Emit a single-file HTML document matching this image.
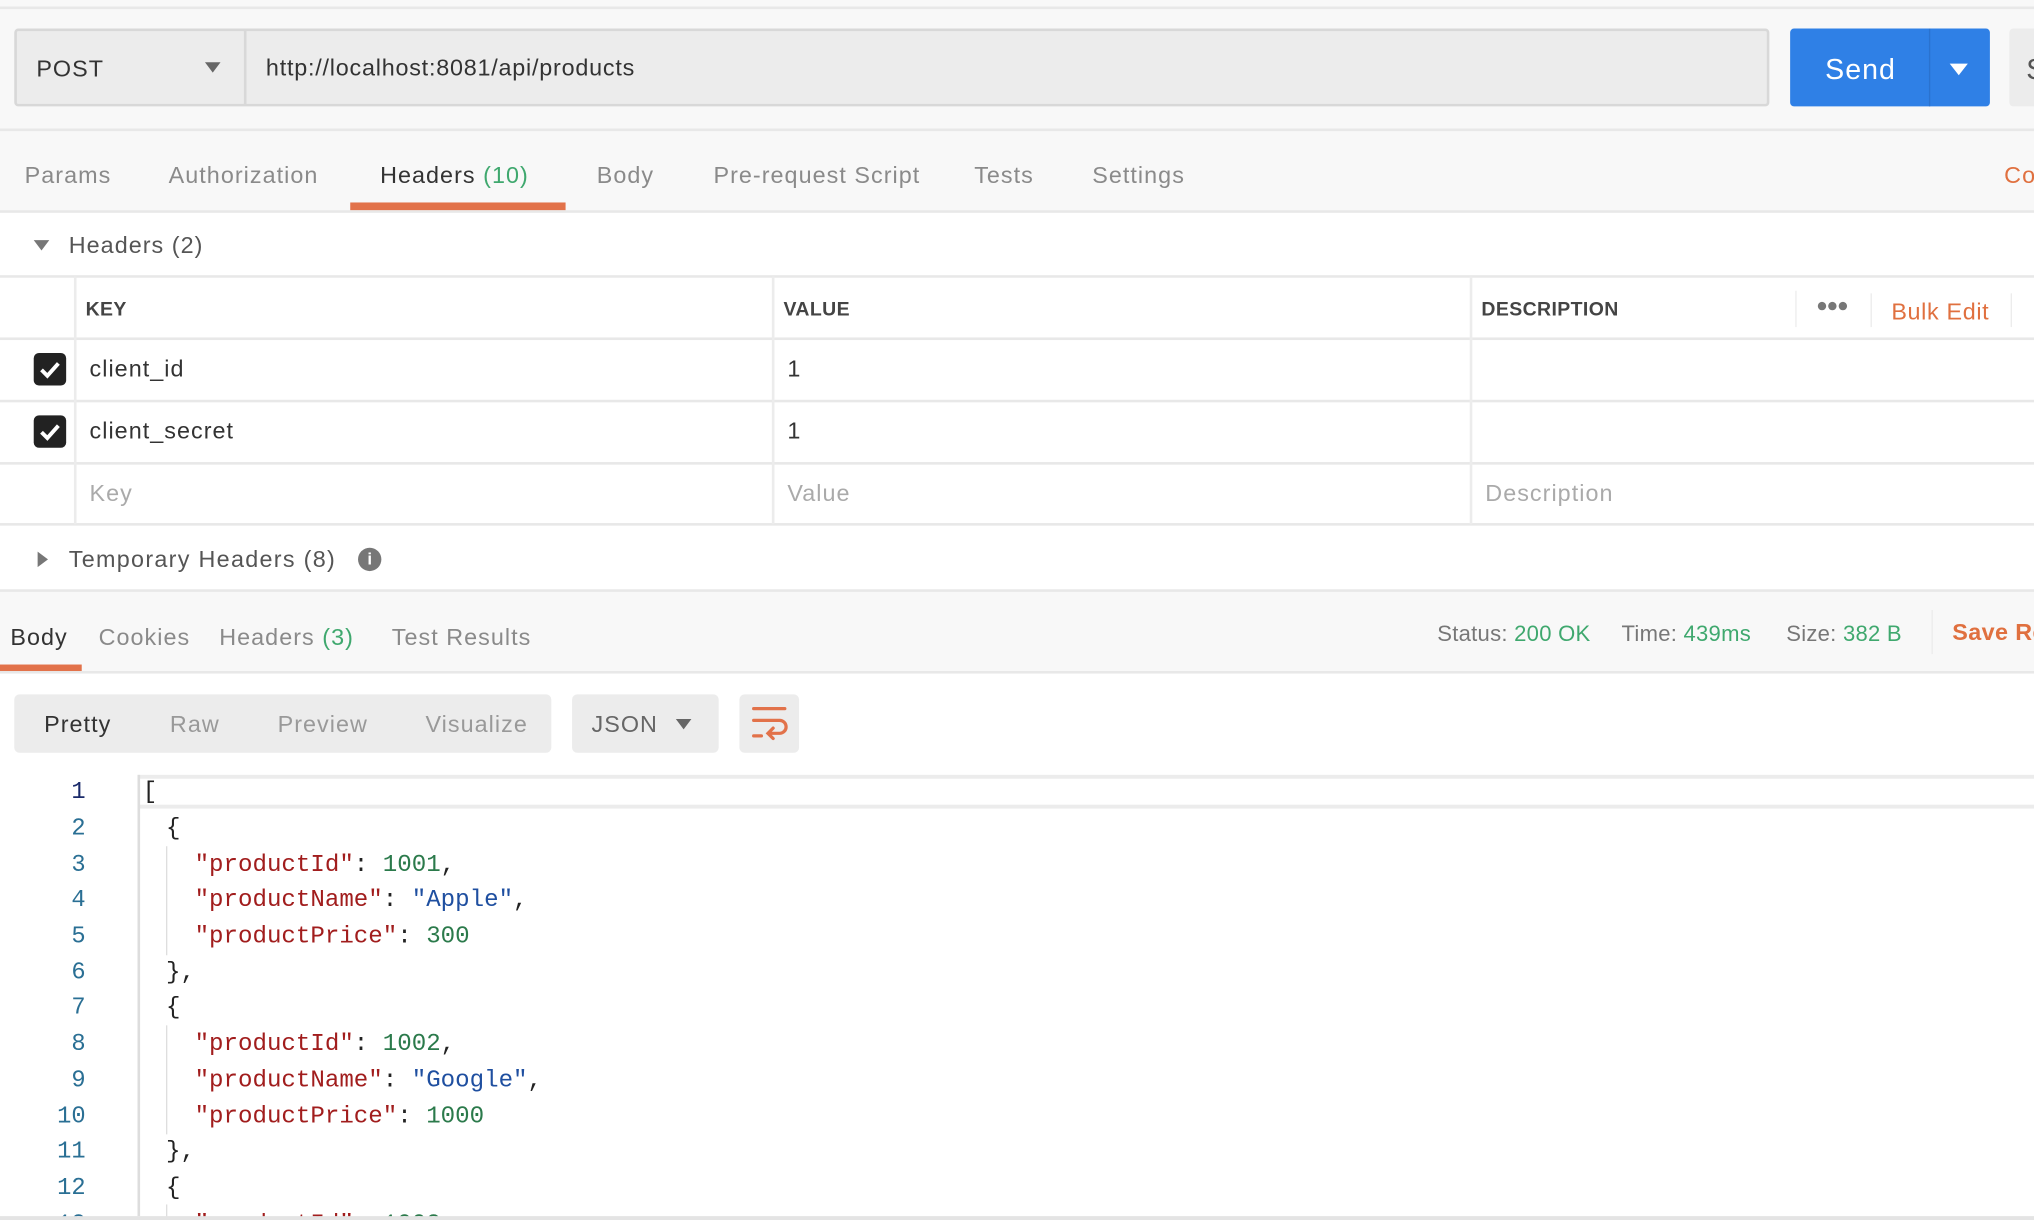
<!DOCTYPE html>
<html><head><meta charset="utf-8"><style>
*{margin:0;padding:0;box-sizing:border-box}
html,body{width:2034px;height:1220px;overflow:hidden;background:#f8f8f8}
#w{position:absolute;left:0;top:0;width:1568px;height:940px;transform:scale(1.2972,1.2979);transform-origin:0 0;font-family:"Liberation Sans",sans-serif;background:#f8f8f8;overflow:hidden;letter-spacing:0.8px}
.a{position:absolute;white-space:nowrap}
.t{font-size:18px;color:#8a8a8a}
.hl{position:absolute;height:2px;background:#e8e8e8;left:0;width:1568px}
.vl{position:absolute;width:2px;background:#ececec}
.cb{position:absolute;left:26px;width:25px;height:25px;background:#222;border-radius:4px}
.m{font-family:"Liberation Mono",monospace;font-size:18.6px;color:#222;letter-spacing:0}
.k{color:#a11d1d}.s{color:#1f4fa0}.n{color:#2b7a4b}
.ln{position:absolute;width:60px;text-align:right;left:6px;font-family:"Liberation Mono",monospace;font-size:18.3px;color:#2a6f94;letter-spacing:0}
</style></head><body><div id="w">
<div class="hl" style="top:5px"></div>
<div class="a" style="left:11px;top:22px;width:1353px;height:60px;background:#ececec;border:2px solid #d8d8d8;border-radius:3px"></div>
<div class="a" style="left:188px;top:23px;width:2px;height:58px;background:#d8d8d8"></div>
<div class="a" style="left:28px;top:43px;font-size:18px;color:#333">POST</div>
<div class="a" style="left:158px;top:48px;width:0;height:0;border-left:6px solid transparent;border-right:6px solid transparent;border-top:8px solid #666"></div>
<div class="a" style="left:205px;top:42px;font-size:18px;color:#333;letter-spacing:0.6px">http://localhost:8081/api/products</div>
<div class="a" style="left:1380px;top:22px;width:154px;height:60px;background:#2f80e6;border-radius:3px"></div>
<div class="a" style="left:1487px;top:22px;width:1px;height:60px;background:#2a72cf"></div>
<div class="a" style="left:1407px;top:41px;font-size:22px;color:#fff">Send</div>
<div class="a" style="left:1503px;top:49px;width:0;height:0;border-left:7px solid transparent;border-right:7px solid transparent;border-top:9px solid #fff"></div>
<div class="a" style="left:1549px;top:22px;width:30px;height:60px;background:#ececec;border-radius:3px"></div>
<div class="a" style="left:1562px;top:41px;font-size:22px;color:#555">S</div>
<div class="hl" style="top:99px"></div>
<div class="a t" style="left:19px;top:125px">Params</div>
<div class="a t" style="left:130px;top:125px">Authorization</div>
<div class="a t" style="left:293px;top:125px;color:#333">Headers <span style="color:#3fa86e">(10)</span></div>
<div class="a t" style="left:460px;top:125px">Body</div>
<div class="a t" style="left:550px;top:125px">Pre-request Script</div>
<div class="a t" style="left:751px;top:125px">Tests</div>
<div class="a t" style="left:842px;top:125px">Settings</div>
<div class="a t" style="left:1545px;top:125px;color:#e0703f">Co</div>
<div class="a" style="left:270px;top:156px;width:166px;height:6px;background:#e2724a"></div>
<div class="hl" style="top:162px"></div>
<div class="a" style="left:0;top:164px;width:1568px;height:291px;background:#fff"></div>
<div class="a" style="left:26px;top:185px;width:0;height:0;border-left:6px solid transparent;border-right:6px solid transparent;border-top:8px solid #777"></div>
<div class="a" style="left:53px;top:179px;font-size:18px;color:#555">Headers (2)</div>
<div class="hl" style="top:212px"></div>
<div class="hl" style="top:260px"></div>
<div class="hl" style="top:308px"></div>
<div class="hl" style="top:356px"></div>
<div class="hl" style="top:403px"></div>
<div class="vl" style="left:57px;top:213px;height:191px"></div>
<div class="vl" style="left:595px;top:213px;height:191px"></div>
<div class="vl" style="left:1133px;top:213px;height:191px"></div>
<div class="vl" style="left:1384px;top:224px;height:28px;width:1px"></div>
<div class="vl" style="left:1442px;top:226px;height:26px;width:1px"></div>
<div class="vl" style="left:1550px;top:226px;height:26px;width:1px"></div>
<div class="a" style="left:66px;top:230px;font-size:15px;font-weight:bold;color:#444;letter-spacing:0.3px">KEY</div>
<div class="a" style="left:604px;top:230px;font-size:15px;font-weight:bold;color:#444;letter-spacing:0.3px">VALUE</div>
<div class="a" style="left:1142px;top:230px;font-size:15px;font-weight:bold;color:#444;letter-spacing:0.3px">DESCRIPTION</div>
<div class="a" style="left:1400px;top:227px;font-size:15px;color:#777;letter-spacing:-1px">●●●</div>
<div class="a" style="left:1458px;top:230px;font-size:18px;color:#e0703f;letter-spacing:0.5px">Bulk Edit</div>
<div class="cb" style="top:272px"><svg width="25" height="25"><path d="M6 13l4.5 4.5L19 8" stroke="#fff" stroke-width="3" fill="none"/></svg></div>
<div class="cb" style="top:320px"><svg width="25" height="25"><path d="M6 13l4.5 4.5L19 8" stroke="#fff" stroke-width="3" fill="none"/></svg></div>
<div class="a" style="left:69px;top:274px;font-size:18px;color:#333">client_id</div>
<div class="a" style="left:607px;top:274px;font-size:18px;color:#333">1</div>
<div class="a" style="left:69px;top:322px;font-size:18px;color:#333">client_secret</div>
<div class="a" style="left:607px;top:322px;font-size:18px;color:#333">1</div>
<div class="a" style="left:69px;top:370px;font-size:18px;color:#aaa">Key</div>
<div class="a" style="left:607px;top:370px;font-size:18px;color:#aaa">Value</div>
<div class="a" style="left:1145px;top:370px;font-size:18px;color:#aaa">Description</div>
<div class="a" style="left:29px;top:425px;width:0;height:0;border-top:6px solid transparent;border-bottom:6px solid transparent;border-left:8px solid #777"></div>
<div class="a" style="left:53px;top:421px;font-size:18px;color:#555;letter-spacing:1px">Temporary Headers (8)</div>
<div class="a" style="left:276px;top:422px;width:18px;height:18px;border-radius:50%;background:#777;color:#fff;font-size:13px;font-weight:bold;text-align:center;line-height:18px;letter-spacing:0">i</div>
<div class="hl" style="top:454px"></div>
<div class="a" style="left:8px;top:481px;font-size:18px;color:#333">Body</div>
<div class="a t" style="left:76px;top:481px">Cookies</div>
<div class="a t" style="left:169px;top:481px">Headers <span style="color:#3fa86e">(3)</span></div>
<div class="a t" style="left:302px;top:481px">Test Results</div>
<div class="a" style="left:0;top:512px;width:63px;height:6px;background:#e2724a"></div>
<div class="a" style="left:1108px;top:479px;font-size:17px;color:#777;letter-spacing:0.2px">Status: <span style="color:#3fa86e">200 OK</span></div>
<div class="a" style="left:1250px;top:479px;font-size:17px;color:#777;letter-spacing:0.2px">Time: <span style="color:#3fa86e">439ms</span></div>
<div class="a" style="left:1377px;top:479px;font-size:17px;color:#777;letter-spacing:0.2px">Size: <span style="color:#3fa86e">382 B</span></div>
<div class="vl" style="left:1489px;top:470px;height:34px;width:1px"></div>
<div class="a" style="left:1505px;top:477px;font-size:18px;font-weight:bold;color:#e0703f;letter-spacing:0.3px">Save Re</div>
<div class="hl" style="top:517px"></div>
<div class="a" style="left:0;top:519px;width:1568px;height:418px;background:#fff"></div>
<div class="a" style="left:11px;top:535px;width:414px;height:45px;background:#ececec;border-radius:4px"></div>
<div class="a" style="left:34px;top:548px;font-size:18px;color:#333">Pretty</div>
<div class="a t" style="left:131px;top:548px;color:#999">Raw</div>
<div class="a t" style="left:214px;top:548px;color:#999">Preview</div>
<div class="a t" style="left:328px;top:548px;color:#999">Visualize</div>
<div class="a" style="left:441px;top:535px;width:113px;height:45px;background:#ececec;border-radius:4px"></div>
<div class="a" style="left:456px;top:548px;font-size:18px;color:#666">JSON</div>
<div class="a" style="left:521px;top:554px;width:0;height:0;border-left:6px solid transparent;border-right:6px solid transparent;border-top:8px solid #666"></div>
<div class="a" style="left:570px;top:535px;width:46px;height:45px;background:#ececec;border-radius:4px"><svg width="46" height="45"><path d="M11 11h24M11 20h20a5 5 0 0 1 0 10h-8M26 26l-4 4 4 4M11 32h6" stroke="#e2724a" stroke-width="2.5" fill="none" stroke-linecap="round"/></svg></div>
<div class="a" style="left:106px;top:597px;width:1462px;height:26px;border-top:3px solid #ececec;border-bottom:3px solid #ececec;background:#fff"></div>
<div class="a" style="left:106px;top:597px;width:2px;height:340px;background:#ddd"></div>
<div class="a" style="left:128px;top:652px;width:1px;height:84px;background:#ddd"></div>
<div class="a" style="left:128px;top:790px;width:1px;height:84px;background:#ddd"></div>
<div class="a" style="left:128px;top:928px;width:1px;height:10px;background:#ddd"></div>
<div class="ln" style="top:601px;color:#1a2a6a">1</div>
<div class="ln" style="top:629px">2</div><div class="ln" style="top:657px">3</div><div class="ln" style="top:684px">4</div><div class="ln" style="top:712px">5</div><div class="ln" style="top:740px">6</div><div class="ln" style="top:767px">7</div><div class="ln" style="top:795px">8</div><div class="ln" style="top:823px">9</div><div class="ln" style="top:851px">10</div><div class="ln" style="top:878px">11</div><div class="ln" style="top:906px">12</div><div class="ln" style="top:934px">13</div>
<div class="a m" style="left:110px;top:600px">[</div>
<div class="a m" style="left:128px;top:628px">{</div>
<div class="a m" style="left:150px;top:656px"><span class="k">"productId"</span>: <span class="n">1001</span>,</div>
<div class="a m" style="left:150px;top:683px"><span class="k">"productName"</span>: <span class="s">"Apple"</span>,</div>
<div class="a m" style="left:150px;top:711px"><span class="k">"productPrice"</span>: <span class="n">300</span></div>
<div class="a m" style="left:128px;top:739px">},</div>
<div class="a m" style="left:128px;top:766px">{</div>
<div class="a m" style="left:150px;top:794px"><span class="k">"productId"</span>: <span class="n">1002</span>,</div>
<div class="a m" style="left:150px;top:822px"><span class="k">"productName"</span>: <span class="s">"Google"</span>,</div>
<div class="a m" style="left:150px;top:850px"><span class="k">"productPrice"</span>: <span class="n">1000</span></div>
<div class="a m" style="left:128px;top:877px">},</div>
<div class="a m" style="left:128px;top:905px">{</div>
<div class="a m" style="left:150px;top:933px"><span class="k">"productId"</span>: <span class="n">1003</span>,</div>
<div class="a" style="left:0;top:937px;width:1568px;height:3px;background:#e4e4e4"></div>
</div></body></html>
